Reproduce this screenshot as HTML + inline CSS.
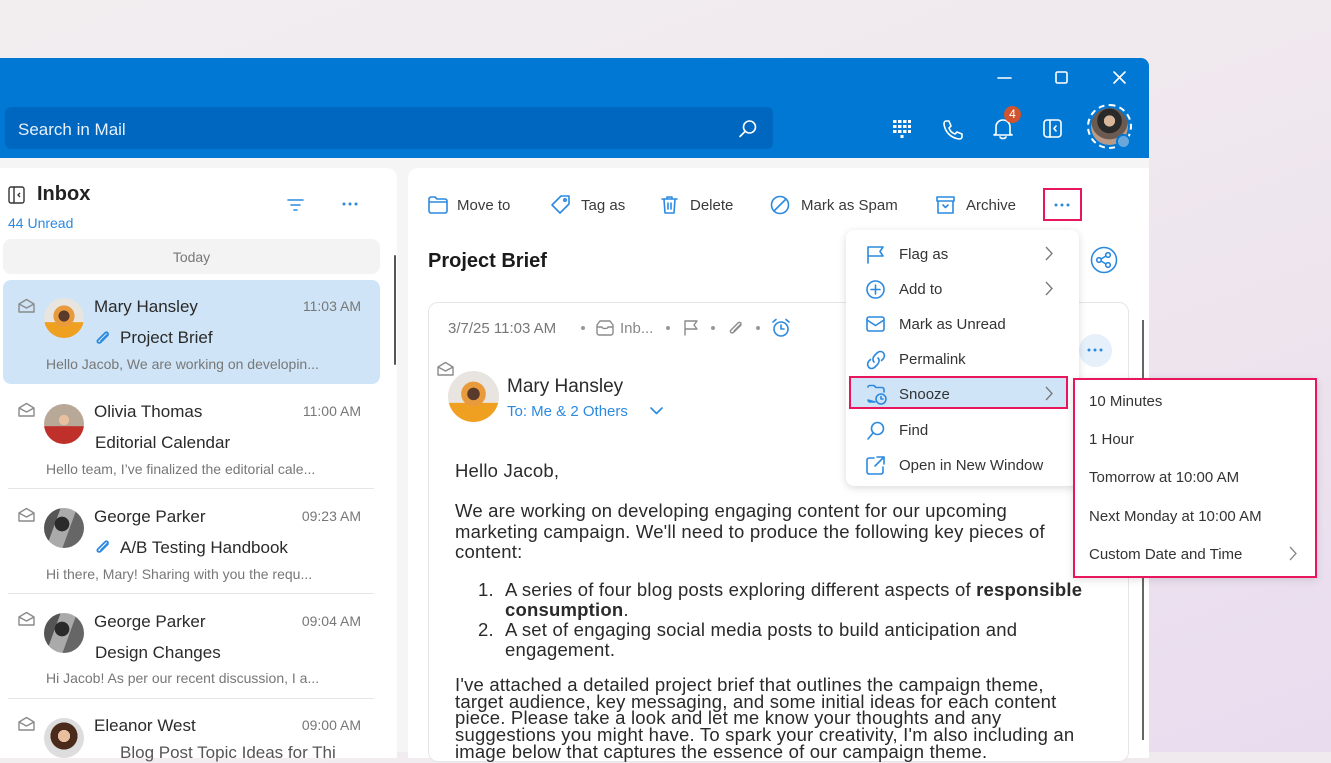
<!DOCTYPE html>
<html><head><meta charset="utf-8"><style>
*{box-sizing:border-box;margin:0;padding:0}
body{width:1331px;height:752px;overflow:hidden;position:relative;font-family:"Liberation Sans",sans-serif;background:linear-gradient(160deg,#f2eef0 0%,#f0e9ee 40%,#e9dcef 100%);color:#333}
.a{position:absolute;white-space:nowrap}
svg{position:absolute;overflow:visible}
.ic{fill:none;stroke:#2b8ae0;stroke-width:1.6;stroke-linecap:round;stroke-linejoin:round}
.gi{fill:none;stroke:#8a8a8a;stroke-width:1.4;stroke-linecap:round;stroke-linejoin:round}
.wi{fill:none;stroke:#fff;stroke-width:1.6;stroke-linecap:round;stroke-linejoin:round}
.av{position:absolute;border-radius:50%;overflow:hidden}
.name{font-size:17px;color:#2a2a2a}
.time{font-size:14px;color:#777;text-align:right}
.subj{font-size:17px;color:#2a2a2a}
.prev{font-size:14px;color:#777}
.tb{font-size:15px;color:#3a3a3a}
.mi{font-size:15px;color:#333}
.body{font-family:"Liberation Sans",sans-serif;font-size:18.5px;letter-spacing:.2px;color:#2a2a2a}
</style></head><body>
<div class="a" style="left:0;top:58px;width:1149px;height:694px;background:#f5f5f5;border-top-right-radius:8px;overflow:hidden">
 <div class="a" style="left:0;top:0;width:1149px;height:100px;background:#0078d4"></div>
</div>
<div class="a" style="left:5px;top:107px;width:768px;height:42px;background:#0067c0;border-radius:6px"></div>
<div class="a" style="left:18px;top:120px;font-size:17px;color:#e8f1fb">Search in Mail</div>
<svg style="left:738px;top:119px" width="20" height="20"><circle cx="11.5" cy="8" r="6" class="wi"/><line x1="7" y1="12.5" x2="2" y2="17.5" class="wi"/></svg>
<svg style="left:997px;top:70px" width="140" height="16"><line x1="1" y1="8" x2="14" y2="8" class="wi" stroke-width="1.3"/><rect x="59" y="2" width="11" height="11" rx="1.5" class="wi" stroke-width="1.3"/><path d="M117 2 L128 13 M128 2 L117 13" class="wi" stroke-width="1.3"/></svg>
<svg style="left:892px;top:119px" width="20" height="20"><g fill="#fff"><rect x="1" y="1" width="3.5" height="3" /><rect x="6" y="1" width="3.5" height="3"/><rect x="11" y="1" width="3.5" height="3"/><rect x="16" y="1" width="3" height="3"/><rect x="1" y="6" width="3.5" height="3"/><rect x="6" y="6" width="3.5" height="3"/><rect x="11" y="6" width="3.5" height="3"/><rect x="16" y="6" width="3" height="3"/><rect x="1" y="11" width="3.5" height="3"/><rect x="6" y="11" width="3.5" height="3"/><rect x="11" y="11" width="3.5" height="3"/><rect x="16" y="11" width="3" height="3"/><rect x="8.5" y="16" width="3" height="3"/></g></svg>
<svg style="left:942px;top:119px" width="22" height="22"><path d="M4 2 L7 2 L9 7 L7 9 C8 12 10 14 13 15 L15 13 L20 15 L20 18 C20 19 19 20 17 20 C9 19 3 13 2 5 C2 3 3 2 4 2Z" class="wi" stroke-width="1.4"/></svg>
<svg style="left:992px;top:118px" width="22" height="22"><path d="M4 16 L4 9 C4 5 7 2 11 2 C15 2 18 5 18 9 L18 16 L20 17 L2 17 L4 16Z M8 19 C9 21 13 21 14 19" class="wi" stroke-width="1.4"/></svg>
<div class="a" style="left:1004px;top:106px;width:17px;height:17px;border-radius:50%;background:#d0552e;color:#fff;font-size:12px;text-align:center;line-height:17px">4</div>
<svg style="left:1043px;top:119px" width="20" height="20"><rect x="1" y="1" width="17" height="17" rx="3" class="wi" stroke-width="1.4"/><line x1="7" y1="1" x2="7" y2="18" class="wi" stroke-width="1.4"/><path d="M13 7 L11 9.5 L13 12" class="wi" stroke-width="1.4"/></svg>
<div class="av" style="left:1087px;top:104px;width:45px;height:45px;border:2px dashed #fff"></div>
<div class="av" style="left:1091px;top:108px;width:37px;height:37px;background:radial-gradient(circle at 50% 35%,#d9b79a 0 18%,#2a2a2a 19% 40%,#6b5a4f 41% 60%,#b89a86 61%)"></div>
<div class="av" style="left:1116px;top:134px;width:15px;height:15px;background:#6aa8dc;border:2px solid #0078d4"></div>

<div class="a" style="left:0;top:168px;width:397px;height:590px;background:#fff;border-top-right-radius:10px"></div>
<svg style="left:8px;top:186px" width="18" height="18"><rect x="1" y="1" width="15" height="16" rx="2" fill="none" stroke="#333" stroke-width="1.4"/><line x1="6" y1="1" x2="6" y2="17" stroke="#333" stroke-width="1.4"/><path d="M12 7 L10 9 L12 11" fill="none" stroke="#333" stroke-width="1.3"/></svg>
<div class="a" style="left:37px;top:183px;font-size:20px;font-weight:bold;color:#222">Inbox</div>
<div class="a" style="left:8px;top:215px;font-size:14px;color:#2b8ae0">44 Unread</div>
<svg style="left:286px;top:197px" width="20" height="16"><path d="M2 3 H17 M5 8 H14 M8 13 H11" stroke="#2b8ae0" stroke-width="1.6" stroke-linecap="round"/></svg>
<svg style="left:342px;top:201px" width="18" height="6"><circle cx="2" cy="3" r="1.5" fill="#2b8ae0"/><circle cx="8" cy="3" r="1.5" fill="#2b8ae0"/><circle cx="14" cy="3" r="1.5" fill="#2b8ae0"/></svg>
<div class="a" style="left:3px;top:239px;width:377px;height:35px;background:#f3f3f3;border-radius:8px;text-align:center;line-height:36px;font-size:14px;color:#777">Today</div>
<div class="a" style="left:3px;top:280px;width:377px;height:104px;background:#cfe4f6;border-radius:8px"></div>
<div class="a" style="left:394px;top:255px;width:2px;height:110px;background:#555;border-radius:1px"></div>

<svg style="left:18px;top:298px" width="18" height="16"><path d="M1 6 L8.5 1.5 L16 6 L16 14 L1 14Z M1 6 L8.5 10 L16 6" class="gi"/></svg>
<div class="av" style="left:44px;top:298px;width:40px;height:40px;background:radial-gradient(circle at 50% 45%,#5a3a2a 0 18%,#e89a3c 19% 35%,transparent 36%),linear-gradient(#e8e4e0 60%,#f0a020 61%)"></div>
<div class="a name" style="left:94px;top:297px">Mary Hansley</div>
<div class="a time" style="left:280px;top:298px;width:81px">11:03 AM</div>
<svg style="left:94px;top:329px" width="18" height="18"><path d="M14 6 L7 13 C5 15 2 13 4 11 L11 4 C12.5 2.5 15 4 13.5 5.5 L7 12" fill="none" stroke="#2b8ae0" stroke-width="1.8" stroke-linecap="round"/></svg>
<div class="a subj" style="left:120px;top:328px">Project Brief</div>
<div class="a prev" style="left:46px;top:356px">Hello Jacob, We are working on developin...</div>
<svg style="left:18px;top:402px" width="18" height="16"><path d="M1 6 L8.5 1.5 L16 6 L16 14 L1 14Z M1 6 L8.5 10 L16 6" class="gi"/></svg>
<div class="av" style="left:44px;top:404px;width:40px;height:40px;background:radial-gradient(circle at 50% 40%,#e8c0a0 0 16%,transparent 17%),linear-gradient(#b8a898 55%,#c0302a 56%)"></div>
<div class="a name" style="left:94px;top:402px">Olivia Thomas</div>
<div class="a time" style="left:280px;top:403px;width:81px">11:00 AM</div>
<div class="a subj" style="left:95px;top:433px">Editorial Calendar</div>
<div class="a prev" style="left:46px;top:461px">Hello team, I’ve finalized the editorial cale...</div>
<div class="a" style="left:8px;top:488px;width:366px;height:1px;background:#e6e6e6"></div>
<svg style="left:18px;top:507px" width="18" height="16"><path d="M1 6 L8.5 1.5 L16 6 L16 14 L1 14Z M1 6 L8.5 10 L16 6" class="gi"/></svg>
<div class="av" style="left:44px;top:508px;width:40px;height:40px;background:radial-gradient(circle at 45% 40%,#2a2a2a 0 22%,transparent 23%),linear-gradient(110deg,#555 30%,#aaa 31% 60%,#666 61%)"></div>
<div class="a name" style="left:94px;top:507px">George Parker</div>
<div class="a time" style="left:280px;top:508px;width:81px">09:23 AM</div>
<svg style="left:94px;top:538px" width="18" height="18"><path d="M14 6 L7 13 C5 15 2 13 4 11 L11 4 C12.5 2.5 15 4 13.5 5.5 L7 12" fill="none" stroke="#2b8ae0" stroke-width="1.8" stroke-linecap="round"/></svg>
<div class="a subj" style="left:120px;top:538px">A/B Testing Handbook</div>
<div class="a prev" style="left:46px;top:566px">Hi there, Mary! Sharing with you the requ...</div>
<div class="a" style="left:8px;top:593px;width:366px;height:1px;background:#e6e6e6"></div>
<svg style="left:18px;top:611px" width="18" height="16"><path d="M1 6 L8.5 1.5 L16 6 L16 14 L1 14Z M1 6 L8.5 10 L16 6" class="gi"/></svg>
<div class="av" style="left:44px;top:613px;width:40px;height:40px;background:radial-gradient(circle at 45% 40%,#2a2a2a 0 22%,transparent 23%),linear-gradient(110deg,#555 30%,#aaa 31% 60%,#666 61%)"></div>
<div class="a name" style="left:94px;top:612px">George Parker</div>
<div class="a time" style="left:280px;top:613px;width:81px">09:04 AM</div>
<div class="a subj" style="left:95px;top:643px">Design Changes</div>
<div class="a prev" style="left:46px;top:670px">Hi Jacob! As per our recent discussion, I a...</div>
<div class="a" style="left:8px;top:698px;width:366px;height:1px;background:#e6e6e6"></div>
<svg style="left:18px;top:716px" width="18" height="16"><path d="M1 6 L8.5 1.5 L16 6 L16 14 L1 14Z M1 6 L8.5 10 L16 6" class="gi"/></svg>
<div class="av" style="left:44px;top:718px;width:40px;height:40px;background:radial-gradient(circle at 50% 45%,#e8c0a0 0 20%,#4a2a1a 21% 45%,#ddd 46%)"></div>
<div class="a name" style="left:94px;top:716px">Eleanor West</div>
<div class="a time" style="left:280px;top:717px;width:81px">09:00 AM</div>
<div class="a subj" style="left:120px;top:743px;color:#555">Blog Post Topic Ideas for Thi</div>

<div class="a" style="left:408px;top:168px;width:741px;height:590px;background:#fff;border-top-left-radius:10px"></div>
<svg style="left:428px;top:196px" width="20" height="18"><path d="M1 3 C1 2 2 1 3 1 L7 1 L9 3 L17 3 C18 3 19 4 19 5 L19 15 C19 16 18 17 17 17 L3 17 C2 17 1 16 1 15Z M1 6 L19 6" class="ic"/></svg>
<div class="a tb" style="left:457px;top:197px">Move to</div>
<svg style="left:551px;top:195px" width="20" height="20"><path d="M10 1 L18 1 L18 9 L9 18 L1 10Z" class="ic"/><circle cx="14" cy="5" r="1.2" class="ic"/></svg>
<div class="a tb" style="left:581px;top:197px">Tag as</div>
<svg style="left:660px;top:195px" width="20" height="20"><path d="M2 4 H17 M7 4 L7 2 H12 L12 4 M4 4 L5 18 H14 L15 4 M8 8 V14 M11 8 V14" class="ic"/></svg>
<div class="a tb" style="left:690px;top:197px">Delete</div>
<svg style="left:770px;top:195px" width="20" height="20"><circle cx="10" cy="10" r="8.5" class="ic"/><line x1="4" y1="16" x2="16" y2="4" class="ic"/></svg>
<div class="a tb" style="left:801px;top:197px">Mark as Spam</div>
<svg style="left:936px;top:195px" width="20" height="20"><path d="M1 2 H18 V6 H1Z M2 6 V18 H17 V6 M7 10 L9.5 12.5 L12 10" class="ic"/></svg>
<div class="a tb" style="left:966px;top:197px">Archive</div>
<div class="a" style="left:1043px;top:188px;width:39px;height:33px;border:2px solid #e8175d"></div>
<svg style="left:1054px;top:202px" width="18" height="6"><circle cx="2" cy="3" r="1.5" fill="#2b8ae0"/><circle cx="8" cy="3" r="1.5" fill="#2b8ae0"/><circle cx="14" cy="3" r="1.5" fill="#2b8ae0"/></svg>

<div class="a" style="left:428px;top:250px;font-size:20px;font-weight:bold;color:#1a1a1a">Project Brief</div>
<svg style="left:1090px;top:246px" width="28" height="28"><circle cx="14" cy="14" r="12.5" class="ic"/><circle cx="18" cy="9" r="2.3" class="ic"/><circle cx="9" cy="14" r="2.3" class="ic"/><circle cx="18" cy="19" r="2.3" class="ic"/><path d="M11 13 L16 10 M11 15 L16 18" class="ic"/></svg>

<div class="a" style="left:428px;top:302px;width:701px;height:460px;border:1px solid #e6e6e6;border-radius:10px;background:#fff"></div>
<div class="a" style="left:1142px;top:320px;width:2px;height:420px;background:#666"></div>
<div class="a" style="left:448px;top:320px;font-size:15px;color:#777">3/7/25 11:03 AM</div>
<div class="a" style="left:581px;top:326px;width:4px;height:4px;border-radius:50%;background:#999"></div>
<svg style="left:596px;top:320px" width="18" height="16"><path d="M1 5 L4 1 H14 L17 5 V13 C17 14 16 15 15 15 H3 C2 15 1 14 1 13Z M1 7 H6 C6 9 12 9 12 7 H17" class="gi"/></svg>
<div class="a" style="left:620px;top:320px;font-size:15px;color:#888">Inb...</div>
<div class="a" style="left:666px;top:326px;width:4px;height:4px;border-radius:50%;background:#999"></div>
<svg style="left:683px;top:320px" width="16" height="16"><path d="M2 15 V1 H14 L11 5 L14 9 H2" class="gi"/></svg>
<div class="a" style="left:711px;top:326px;width:4px;height:4px;border-radius:50%;background:#999"></div>
<svg style="left:727px;top:319px" width="18" height="18"><path d="M14 6 L7 13 C5 15 2 13 4 11 L11 4 C12.5 2.5 15 4 13.5 5.5 L7 12" class="gi" stroke-width="1.6"/></svg>
<div class="a" style="left:756px;top:326px;width:4px;height:4px;border-radius:50%;background:#999"></div>
<svg style="left:771px;top:318px" width="20" height="20"><circle cx="10" cy="11" r="7" class="ic" stroke-width="1.8"/><path d="M10 7 V11 H13 M2 4 L5 1.5 M18 4 L15 1.5" class="ic" stroke-width="1.8"/></svg>
<div class="a" style="left:1079px;top:334px;width:33px;height:33px;border-radius:50%;background:#e5f0fb"></div>
<svg style="left:1087px;top:347px" width="18" height="6"><circle cx="2" cy="3" r="1.5" fill="#2b8ae0"/><circle cx="8" cy="3" r="1.5" fill="#2b8ae0"/><circle cx="14" cy="3" r="1.5" fill="#2b8ae0"/></svg>

<svg style="left:437px;top:361px" width="18" height="16"><path d="M1 6 L8.5 1.5 L16 6 L16 14 L1 14Z M1 6 L8.5 10 L16 6" class="gi"/></svg>
<div class="av" style="left:448px;top:371px;width:51px;height:51px;background:radial-gradient(circle at 50% 45%,#5a3a2a 0 16%,#e89a3c 17% 32%,transparent 33%),linear-gradient(#e8e4e0 62%,#f0a020 63%)"></div>
<div class="a" style="left:507px;top:376px;font-size:19px;color:#2a2a2a">Mary Hansley</div>
<div class="a" style="left:507px;top:403px;font-size:15px;color:#2b8ae0">To: Me &amp; 2 Others</div>
<svg style="left:650px;top:406px" width="14" height="10"><path d="M1 2 L6.5 7.5 L12 2" class="ic"/></svg>

<div class="a body" style="left:455px;top:460px">Hello Jacob,</div>
<div class="a body" style="left:455px;top:501px;line-height:20.5px">We are working on developing engaging content for our upcoming<br>marketing campaign. We'll need to produce the following key pieces of<br>content:</div>
<div class="a body" style="left:478px;top:580px;line-height:20px">1.<br><br>2.</div>
<div class="a body" style="left:505px;top:580px;line-height:20px">A series of four blog posts exploring different aspects of <b>responsible</b><br><b>consumption</b>.<br>A set of engaging social media posts to build anticipation and<br>engagement.</div>
<div class="a body" style="left:455px;top:677px;line-height:16.7px">I've attached a detailed project brief that outlines the campaign theme,<br>target audience, key messaging, and some initial ideas for each content<br>piece. Please take a look and let me know your thoughts and any<br>suggestions you might have. To spark your creativity, I'm also including an<br>image below that captures the essence of our campaign theme.</div>

<div class="a" style="left:846px;top:230px;width:233px;height:256px;background:#fff;border-radius:8px;box-shadow:0 2px 8px rgba(0,0,0,.15)"></div>
<svg style="left:866px;top:245px" width="20" height="20"><path d="M2 18 V2 H17 L14 6.5 L17 11 H2" class="ic"/></svg>
<div class="a mi" style="left:899px;top:246px">Flag as</div>
<svg style="left:866px;top:280px" width="20" height="20"><circle cx="9.5" cy="9.5" r="8.5" class="ic"/><path d="M9.5 5 V14 M5 9.5 H14" class="ic"/></svg>
<div class="a mi" style="left:899px;top:281px">Add to</div>
<svg style="left:866px;top:316px" width="20" height="18"><rect x="1" y="1" width="17" height="14" rx="2" class="ic"/><path d="M1 4 L9.5 9.5 L18 4" class="ic"/></svg>
<div class="a mi" style="left:899px;top:316px">Mark as Unread</div>
<svg style="left:866px;top:350px" width="20" height="20"><path d="M8 12 C6 10 7 7 9 5 L11 3 C13 1 16 1 17.5 3 C19 5 18.5 7.5 17 9 L15.5 10.5 M12 8 C14 10 13 13 11 15 L9 17 C7 19 4 19 2.5 17 C1 15 1.5 12.5 3 11 L4.5 9.5" class="ic"/></svg>
<div class="a mi" style="left:899px;top:351px">Permalink</div>
<div class="a" style="left:849px;top:376px;width:219px;height:33px;background:#cfe4f6;border:2px solid #e8175d"></div>
<svg style="left:866px;top:384px" width="22" height="22"><path d="M2 3 C2 2 3 1.5 4 1.5 H8 L10 3.5 H16 C17 3.5 18 4.5 18 5.5 V8 M9 18 H4 C3 18 2 17 2 16Z" class="ic"/><circle cx="15" cy="15" r="5" class="ic"/><path d="M15 12.5 V15 H17" class="ic"/></svg>
<div class="a mi" style="left:899px;top:386px">Snooze</div>
<svg style="left:866px;top:421px" width="20" height="20"><circle cx="11.5" cy="7.5" r="6" class="ic"/><line x1="7" y1="12" x2="2" y2="18" class="ic"/></svg>
<div class="a mi" style="left:899px;top:422px">Find</div>
<svg style="left:866px;top:456px" width="20" height="20"><path d="M8 2 H3 C2 2 1 3 1 4 V16 C1 17 2 18 3 18 H15 C16 18 17 17 17 16 V11 M11 1 H18 V8 M18 1 L9 10" class="ic"/></svg>
<div class="a mi" style="left:899px;top:457px">Open in New Window</div>
<svg style="left:1044px;top:245px" width="12" height="160"><path d="M2 2 L8 8.5 L2 15 M2 37 L8 43.5 L2 50 M2 142 L8 148.5 L2 155" fill="none" stroke="#777" stroke-width="1.3"/></svg>

<div class="a" style="left:1073px;top:378px;width:244px;height:200px;background:#fff;border:2px solid #e8175d;box-shadow:0 2px 8px rgba(0,0,0,.12)"></div>
<div class="a mi" style="left:1089px;top:393px">10 Minutes</div>
<div class="a mi" style="left:1089px;top:431px">1 Hour</div>
<div class="a mi" style="left:1089px;top:469px">Tomorrow at 10:00 AM</div>
<div class="a mi" style="left:1089px;top:508px">Next Monday at 10:00 AM</div>
<div class="a mi" style="left:1089px;top:546px">Custom Date and Time</div>
<svg style="left:1288px;top:545px" width="12" height="18"><path d="M2 2 L8 8.5 L2 15" fill="none" stroke="#888" stroke-width="1.3"/></svg>
</body></html>
